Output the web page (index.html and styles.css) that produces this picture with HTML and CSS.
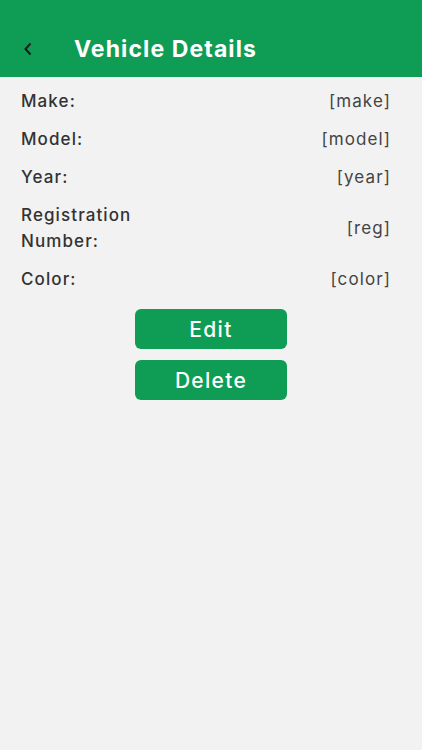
FILE: index.html
```html
<!DOCTYPE html>
<html lang="en">
<head>
    <meta charset="UTF-8">
    <meta name="viewport" content="width=device-width, initial-scale=1.0">
    <title>Vehicle Details</title>
    <link rel="stylesheet" href="styles.css">
</head>
<body>
    <header class="app-bar">
        <button class="back-btn" aria-label="Back">
            <svg width="10" height="14" viewBox="0 0 10 14">
                <path d="M7.5 1.5 L2.5 7 L7.5 12.5" fill="none" stroke="#1c1c1c" stroke-width="2"/>
            </svg>
        </button>
        <h1>Vehicle Details</h1>
    </header>
    <main class="details">
        <div class="row">
            <span class="label">Make:</span>
            <span class="value">[make]</span>
        </div>
        <div class="row">
            <span class="label">Model:</span>
            <span class="value">[model]</span>
        </div>
        <div class="row">
            <span class="label">Year:</span>
            <span class="value">[year]</span>
        </div>
        <div class="row">
            <span class="label">Registration<br>Number:</span>
            <span class="value">[reg]</span>
        </div>
        <div class="row">
            <span class="label">Color:</span>
            <span class="value">[color]</span>
        </div>
        <div class="actions">
            <button class="action-btn">Edit</button>
            <button class="action-btn">Delete</button>
        </div>
    </main>
</body>
</html>
```

FILE: styles.css
```css
body, html {
    margin: 0;
    padding: 0;
    height: 100%;
    background-color: #f2f2f2;
    font-family: Inter, "Open Sans", sans-serif;
}
.app-bar {
    height: 77px;
    background-color: #0f9d55;
    display: flex;
    align-items: center;
    padding-top: 20px;
    box-sizing: border-box;
}
.back-btn {
    background: none;
    border: none;
    padding: 0;
    margin-left: 23px;
    width: 10px;
    height: 14px;
    display: flex;
    cursor: pointer;
}
.app-bar h1 {
    margin: 0 0 0 41px;
    color: #ffffff;
    font-size: 23px;
    font-weight: 700;
    letter-spacing: 1.1px;
}
.details {
    padding: 11px 32px 0 21px;
    display: flex;
    flex-direction: column;
    gap: 12px;
}
.row {
    display: flex;
    justify-content: space-between;
    align-items: center;
    font-size: 17px;
    line-height: 26px;
    color: #333333;
    letter-spacing: 1.1px;
}
.label {
    font-weight: 500;
}
.value {
    font-weight: 400;
    color: #444444;
    margin-right: -1px;
}
.actions {
    display: flex;
    flex-direction: column;
    align-items: center;
    gap: 11px;
    margin-top: 5px;
    margin-right: -11px;
}
.action-btn {
    width: 152px;
    height: 40px;
    border: none;
    border-radius: 6px;
    background-color: #0f9d55;
    color: #ffffff;
    font-family: inherit;
    font-size: 21px;
    font-weight: 500;
    letter-spacing: 1.3px;
    cursor: pointer;
}
```
